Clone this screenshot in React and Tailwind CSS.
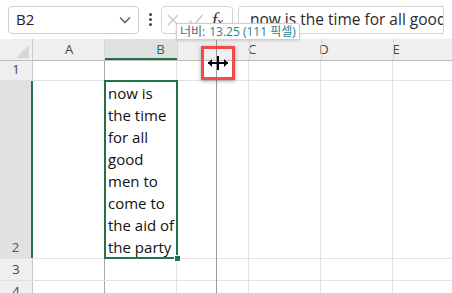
import React from 'react';

const lines = ['now is', 'the time', 'for all', 'good', 'men to', 'come to', 'the aid of', 'the party'];
const cols = [72, 72, 72, 72, 72, 72];
const rows = [
  { n: '1', h: 'h-[20px]' },
  { n: '2', h: 'h-[178px]', sel: true },
  { n: '3', h: 'h-[22px]' },
  { n: '4', h: 'h-[22px]' },
];

const App = () => {
  return (
    <div className="relative w-[452px] h-[293px] overflow-hidden bg-white font-['Open_Sans',sans-serif] text-[#222]">
      {/* formula bar */}
      <div className="flex items-center h-[39px] px-[8px] gap-[5px]">
        <div className="flex items-center justify-between w-[131px] h-[28px] border border-[#d1d1d1] rounded-[4px] pl-[7px] pr-[7px]">
          <span className="text-[15px]">B2</span>
          <svg width="12" height="8" viewBox="0 0 12 8"><path d="M1 1.5l5 5 5-5" fill="none" stroke="#555" strokeWidth="1.3" /></svg>
        </div>
        <div className="flex flex-col gap-[2px] w-[12px] items-center">
          <span className="w-[3px] h-[3px] bg-[#444] rounded-full" />
          <span className="w-[3px] h-[3px] bg-[#444] rounded-full" />
          <span className="w-[3px] h-[3px] bg-[#444] rounded-full" />
        </div>
        <div className="flex items-center w-[72px] h-[28px] border border-[#d6d6d6] rounded-[4px] pl-[4px] gap-[8px]">
          <svg width="14" height="14" viewBox="0 0 14 14"><path d="M2 2l10 10M12 2L2 12" stroke="#c4c4c4" strokeWidth="1.2" /></svg>
          <svg width="16" height="14" viewBox="0 0 16 14"><path d="M1.5 7.5l4.5 4.5L14.5 2" fill="none" stroke="#c4c4c4" strokeWidth="1.2" /></svg>
          <span className="font-['Liberation_Serif',serif] italic text-[19px] text-[#333] leading-none">f<span className="text-[13px]">x</span></span>
        </div>
        <div className="flex items-center flex-1 h-[28px] border border-[#d6d6d6] rounded-l-[4px] pl-[11px] whitespace-nowrap overflow-hidden">
          <span className="text-[15.5px] text-[#2a2a2a]">now is the time for all good men to come</span>
        </div>
      </div>

      {/* column headers */}
      <div className="relative flex h-[22px] bg-[#efefef] border-b border-[#bdbdbd] text-[13px] text-[#444]">
        <div className="absolute left-[105px] top-0 w-[72px] h-full bg-[#e1e1e1] border-b-2 border-[#217346]" />
        <div className="relative w-[33px] border-r border-[#c8c8c8]">
          <svg className="absolute right-[3px] bottom-[2px]" width="13" height="13" viewBox="0 0 13 13"><path d="M13 0V13H0Z" fill="#d6d6d6" /></svg>
        </div>
        <div className="w-[72px] flex items-center justify-center">A</div>
        <div className="relative w-[111px] flex items-center justify-center text-[#217346]">B</div>
        <div className="w-[72px] flex items-center justify-center">C</div>
        <div className="w-[72px] flex items-center justify-center">D</div>
        <div className="w-[72px] flex items-center justify-center">E</div>
        {/* old column borders still drawn */}
        <div className="absolute left-[104px] top-0 w-px h-full bg-[#d4d4d4]" />
        <div className="absolute left-[177px] top-0 w-px h-full bg-[#d4d4d4]" />
        <div className="absolute left-[249px] top-0 w-px h-full bg-[#d4d4d4]" />
        <div className="absolute left-[321px] top-0 w-px h-full bg-[#d4d4d4]" />
        <div className="absolute left-[393px] top-0 w-px h-full bg-[#d4d4d4]" />
      </div>

      {/* rows */}
      {rows.map((r) => (
        <div key={r.n} className={`flex ${r.h} border-b border-[#e1e1e1]`}>
          <div className={`w-[33px] shrink-0 flex items-end justify-center pb-[1px] text-[13px] ${r.sel ? 'bg-[#e1e1e1] text-[#217346] border-r-2 border-[#217346]' : 'bg-[#efefef] text-[#444] border-r border-[#c8c8c8]'}`}>{r.n}</div>
          {cols.map((w, i) => (
            <div key={i} className={`w-[72px] shrink-0 border-r ${i === 0 ? 'border-[#a8a8a8]' : 'border-[#e1e1e1]'}`}>
              {r.sel && i === 1 && (
                <div className="flex flex-col pl-[3px] pt-[1px] text-[15px] leading-[22px] text-[#111] whitespace-nowrap">
                  {lines.map((l) => <span key={l}>{l}</span>)}
                </div>
              )}
            </div>
          ))}
        </div>
      ))}

      {/* selection border */}
      <div className="absolute left-[104px] top-[80px] w-[74px] h-[179px] border-2 border-[#217346] pointer-events-none" />
      <div className="absolute left-[174px] top-[255px] w-[7px] h-[7px] bg-[#217346] border border-white" />

      {/* drag guide line */}
      <div className="absolute left-[216px] top-[39px] w-px h-[254px] bg-[#9a9a9a]" />

      {/* cursor highlight */}
      <div className="absolute left-[201px] top-[46px] w-[34px] h-[34px] border-[3px] border-[#f24a4a] shadow-[0_1px_4px_rgba(0,0,0,0.35)] flex items-center justify-center">
        <svg width="22" height="16" viewBox="0 0 22 16">
          <path d="M11 1V15" stroke="#000" strokeWidth="2" />
          <path d="M1 8H21" stroke="#000" strokeWidth="2" />
          <path d="M1 8L5 4V12Z" fill="#000" />
          <path d="M21 8L17 4V12Z" fill="#000" />
        </svg>
      </div>

      {/* width tooltip */}
      <div className="absolute left-[176px] top-[23px] h-[17px] px-[3px] flex items-center bg-white border border-[#cfcfcf] rounded-[2px] shadow-[0_1px_3px_rgba(0,0,0,0.15)] text-[12px] leading-none whitespace-nowrap font-['Open_Sans','Noto_Sans_CJK_KR',sans-serif]">
        <span className="text-[#4b6770]">너비:</span>
        <span className="text-[#2a7f90] ml-[4px]">13.25 (111 픽셀)</span>
      </div>
    </div>
  );
};

export default App;
